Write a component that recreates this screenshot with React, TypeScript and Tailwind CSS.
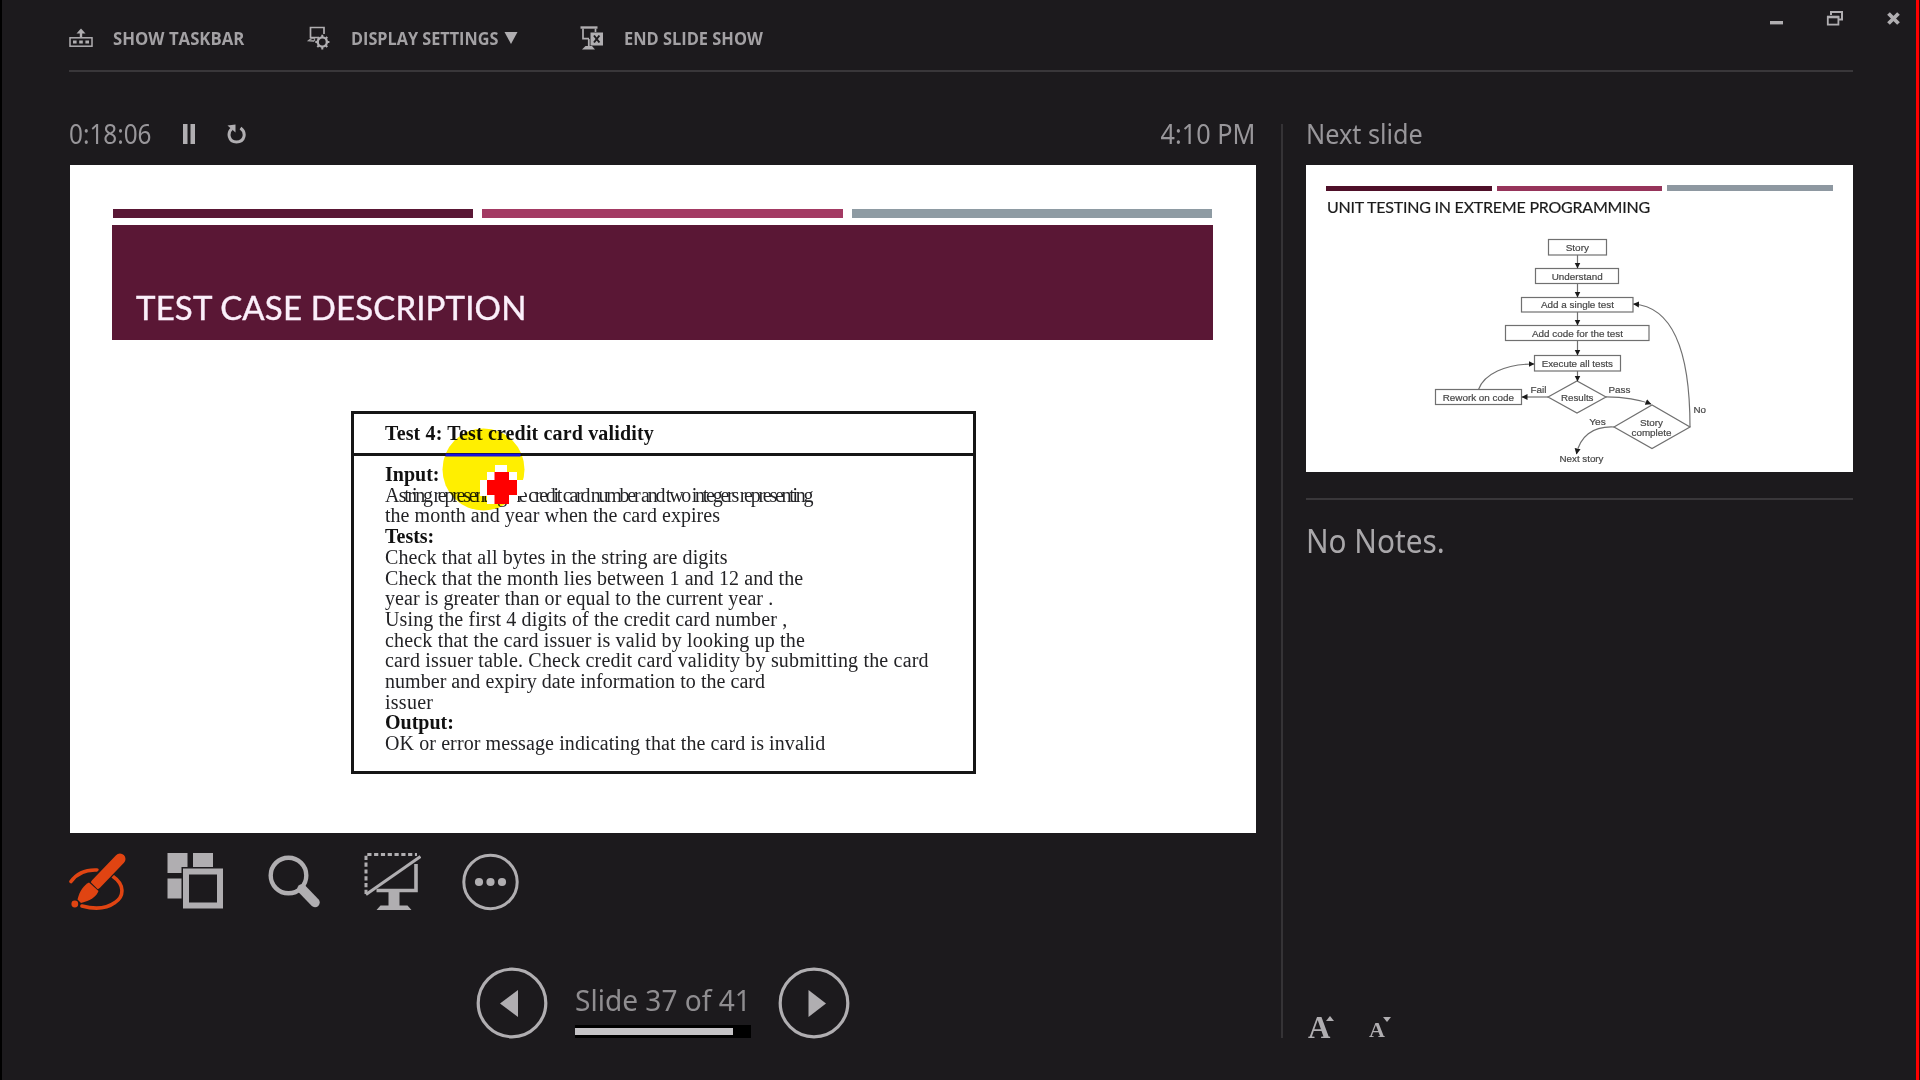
import type { ReactNode } from "react";

const INK = "#b0aeb1";

function TaskbarIcon() {
  return (
    <svg width="24" height="20" viewBox="0 0 24 20" fill="none" stroke={INK}>
      <path d="M12 9V4" strokeWidth="2.4" />
      <path d="M7.5 5.5L12 0.5L16.5 5.5Z" fill={INK} stroke="none" />
      <rect x="1" y="9.8" width="22" height="8.4" strokeWidth="1.5" />
      <path d="M4 14h3.6M10.2 14h3.6M16.4 14H20" strokeWidth="3.2" />
    </svg>
  );
}

function DisplayIcon() {
  return (
    <svg width="24" height="24" viewBox="0 0 24 24" fill="none" stroke={INK} strokeWidth="1.7">
      <path d="M10 11.5H3.5V1.5H17V8" />
      <path d="M2 14.5h6l-1.5-2M0.5 15l3-2.5h4.5l-1 3Z" fill={INK} strokeWidth="0.5" />
      <circle cx="15.3" cy="16" r="4.6" strokeWidth="2.4" />
      <path
        d="M15.3 8.8v3M15.3 20.4v3M8.3 16h3M19.4 16h3M10.3 11l2 2M18.3 19l2 2M20.3 11l-2 2M12.3 19l-2 2"
        strokeWidth="2"
      />
    </svg>
  );
}

function EndShowIcon() {
  return (
    <svg width="24" height="24" viewBox="0 0 24 24" fill="none" stroke={INK}>
      <path d="M0.5 1.5H17.5" strokeWidth="2.4" />
      <path d="M3 2.5V12.6H9M15.5 2.5V6" strokeWidth="1.7" />
      <path d="M8.8 13V21" strokeWidth="1.8" />
      <path d="M2 23.5l3.5-3.5h6.5l3 3.5Z" fill={INK} stroke="none" />
      <rect x="10.5" y="6.5" width="12.5" height="13" fill={INK} stroke="none" />
      <path d="M14 9.5l5.4 7M19.4 9.5l-5.4 7" stroke="#1c1a1d" strokeWidth="2" />
    </svg>
  );
}

function TopAction({ icon, children }: { icon: ReactNode; children: ReactNode }) {
  return (
    <button className="flex items-center">
      {icon}
      <span className="ml-[20px] flex items-center whitespace-nowrap text-[18px] leading-6 font-bold text-[#a3a1a4]">
        {children}
      </span>
    </button>
  );
}

function TopBar() {
  return (
    <header className="flex h-[72px] w-full">
      <div className="ml-[67px] flex h-full w-[1784px] border-b-2 border-[#39373a]">
        <nav className="mt-[26px] flex h-6 items-center">
          <div className="w-[238px]">
            <TopAction icon={<TaskbarIcon />}>
              <span className="origin-left scale-x-[0.93]">SHOW TASKBAR</span>
            </TopAction>
          </div>
          <div className="w-[273px]">
            <TopAction icon={<DisplayIcon />}>
              <span className="w-[149px] origin-left scale-x-[0.902]">DISPLAY SETTINGS</span>
              <svg className="ml-1" width="14" height="12" viewBox="0 0 14 12">
                <path d="M0.5 0H13.5L7 12Z" fill={INK} />
              </svg>
            </TopAction>
          </div>
          <TopAction icon={<EndShowIcon />}>
            <span className="origin-left scale-x-[0.912]">END SLIDE SHOW</span>
          </TopAction>
        </nav>
        <div className="mt-[10px] -mr-[47px] ml-auto flex h-[18px] shrink-0">
          <svg width="131" height="18" viewBox="0 0 131 18" fill="none" stroke={INK}>
            <path d="M1 12.7H14" strokeWidth="3.4" />
            <path d="M62 5V2H73V9.5H69.5" strokeWidth="2" />
            <rect x="58.8" y="7" width="10.6" height="7.6" strokeWidth="1.8" />
            <path d="M58 7H70.3" strokeWidth="2.6" />
            <path d="M119.5 3.5L129.5 13.5M129.5 3.5L119.5 13.5" strokeWidth="3.8" />
          </svg>
        </div>
      </div>
    </header>
  );
}

const BOLD = "font-bold text-[#111111]";

const BODY: [string, string][] = [
  ["Input:", BOLD],
  ["A string representing the credit card number and two integers representing", "tracking-[-2.27px]"],
  ["the month and year when the card expires", "tracking-[0.03px]"],
  ["Tests:", BOLD],
  ["Check that all bytes in the string are digits", "tracking-[0.11px]"],
  ["Check that the month lies between 1 and 12 and the", "tracking-[0.1px]"],
  ["year is greater than or equal to the current year .", "tracking-[0.09px]"],
  ["Using the first 4 digits of the credit card number ,", "tracking-[0.12px]"],
  ["check that the card issuer is valid by looking up the", "tracking-[0.17px]"],
  ["card issuer table. Check credit card validity by submitting the card", "tracking-[0.18px]"],
  ["number and expiry date information to the card", "tracking-[0.04px]"],
  ["issuer", "tracking-[0.26px]"],
  ["Output:", BOLD],
  ["OK or error message indicating that the card is invalid", "tracking-[0.1px]"],
];

function CurrentSlide() {
  return (
    <section className="relative h-[668px] w-[1186px] bg-white pt-11">
      <div className="mr-[44px] ml-[43px] flex h-[9px] gap-[9px]">
        <div className="flex-1 bg-[#5a1735]" />
        <div className="flex-1 bg-[#a33a63]" />
        <div className="flex-1 bg-[#8e9ba3]" />
      </div>
      <div className="mr-[43px] ml-[42px] mt-[7px] h-[115px] bg-[#5a1735] pt-[62px] pl-[24px]">
        <h1 className="font-[Lato] text-[33px] leading-10 tracking-[0.15px] whitespace-nowrap text-[#fbeffa] [-webkit-text-stroke:0.4px_#fbeffa]">
          TEST CASE DESCRIPTION
        </h1>
      </div>
      <div className="mt-[71px] ml-[281px] h-[363px] w-[625px] border-[3px] border-[#161616] font-['Liberation_Serif',serif] text-[20px] leading-[20.7px] whitespace-nowrap text-[#232326]">
        <div className="h-[42px] border-b-[3px] border-[#161616] pt-[9px] pl-[31px] font-bold tracking-[0.15px] text-[#111111]">
          Test 4: Test credit card validity
        </div>
        <div className="pt-[8px] pl-[31px]">
          {BODY.map(([text, style]) => (
            <p key={text} className={style}>
              {text}
            </p>
          ))}
        </div>
      </div>
      <svg
        className="absolute top-[263px] left-[372px] mix-blend-multiply"
        width="83"
        height="83"
        viewBox="0 0 83 83"
      >
        <circle cx="41.5" cy="41.5" r="41" fill="#ffef00" />
      </svg>
      <svg className="absolute top-[288px] left-[373px]" width="90" height="60" viewBox="0 0 90 60">
        <path d="M2.5 2H77.5" stroke="#1a12dc" strokeWidth="3" />
        <path
          d="M52 12H64V19H74V27H81V43H74V51H44V43H37V27H44V19H52Z"
          fill="#ffffff"
        />
        <path d="M51.500 19H66V27H74V42H66V51H51.500V42H44V27H51.500Z" fill="#ff0000" />
      </svg>
    </section>
  );
}

function ToolRow() {
  return (
    <div className="-ml-px flex h-[60px] items-center gap-[40px]">
      <svg width="58" height="58" viewBox="0 0 58 58" fill="none" stroke="#e04412">
        <path
          d="M2 28.500C8 20 17 16.500 28 17M44 23.500C55 31 56 43 46 49.500C37 56 24 56 13 53"
          strokeWidth="3.6"
          strokeLinecap="round"
        />
        <path d="M51 6L25 32" stroke="#1c1a1d" strokeWidth="14" />
        <path d="M51 6L27 31" strokeWidth="11" strokeLinecap="round" />
        <path d="M19 27.500L31 39.500" stroke="#1c1a1d" strokeWidth="1.400" />
        <path d="M20 29.500L29.500 38C28 43 21 48 12 50L8.500 46.500C10.500 38 15 32 20 29.500Z" fill="#e04412" stroke="none" />
        <circle cx="5.800" cy="51" r="3.400" fill="#e04412" stroke="none" />
      </svg>
      <svg width="58" height="58" viewBox="0 0 58 58" fill={INK}>
        <path d="M0.500 0H20.500V20H0.500ZM26 0H46V20H26ZM0.500 25.500H20.500V45.500H0.500Z" />
        <rect x="14.500" y="14" width="43" height="43" fill="#1c1a1d" />
        <path fillRule="evenodd" d="M16 15.500H56V55.500H16ZM22 21.500V49.500H50V21.500Z" />
      </svg>
      <svg width="58" height="58" viewBox="0 0 58 58" fill="none" stroke={INK}>
        <circle cx="23.500" cy="22.500" r="17.800" strokeWidth="4.400" />
        <path d="M37 36L50 49.500" strokeWidth="9.500" strokeLinecap="round" />
      </svg>
      <svg width="58" height="58" viewBox="0 0 58 58" fill="none" stroke={INK}>
        <path d="M3 41V1.500H54" strokeWidth="3" strokeDasharray="4.200 2.600" />
        <path d="M3 41.500L57.500 3.500" strokeWidth="3" />
        <path d="M53 11V37.500H13.500" strokeWidth="3.600" />
        <path d="M25.500 38H36.500V52.500H44.500L48.500 57H13.500L17.500 52.500H25.500Z" fill={INK} stroke="none" />
      </svg>
      <svg width="58" height="58" viewBox="0 0 58 58" fill="none" stroke={INK}>
        <circle cx="29.500" cy="29" r="26.700" strokeWidth="3" />
        <g fill={INK} stroke="none">
          <circle cx="18" cy="29" r="4.100" />
          <circle cx="29.500" cy="29" r="4.100" />
          <circle cx="41" cy="29" r="4.100" />
        </g>
      </svg>
    </div>
  );
}

function RoundArrow({ direction }: { direction: "prev" | "next" }) {
  return (
    <button className="h-[72px] w-[72px]">
      <svg width="72" height="72" viewBox="0 0 72 72">
        <circle cx="36" cy="36" r="33.800" fill="none" stroke={INK} strokeWidth="3.200" />
        <path d={direction === "prev" ? "M24 36.500L42 23V50Z" : "M48 36.500L30.500 23V50Z"} fill={INK} />
      </svg>
    </button>
  );
}

function SlideNav() {
  return (
    <div className="flex h-[72px] pl-[406px]">
      <RoundArrow direction="prev" />
      <div className="ml-[27px] w-[176px] pt-[13px]">
        <div className="origin-left scale-x-[0.952] font-['Noto_Sans',sans-serif] text-[29.5px] leading-[40px] whitespace-nowrap text-[#8f8d90]">
          Slide 37 of 41
        </div>
        <div className="mt-[5px] h-[13px] w-[176px] bg-black py-[3px]">
          <div className="h-[7px] w-[158px] bg-[#c5c3c6]" />
        </div>
      </div>
      <div className="ml-[27px]">
        <RoundArrow direction="next" />
      </div>
    </div>
  );
}

const BOXES: [number, number, number, number][] = [
  [1548.5, 239.5, 58, 15.5],
  [1535.5, 268.5, 83, 15],
  [1521.5, 297.5, 111.5, 14.5],
  [1505.5, 325.5, 143.5, 15],
  [1534.5, 355.5, 86, 15.5],
  [1435.5, 389.5, 86, 15],
];

const LABELS: [string, number, number, number][] = [
  ["Story", 1565.7, 251, 23.3],
  ["Understand", 1551.7, 280, 51],
  ["Add a single test", 1541, 308.3, 73],
  ["Add code for the test", 1532, 336.7, 91],
  ["Execute all tests", 1541.7, 367.2, 71.3],
  ["Rework on code", 1442.7, 400.5, 71.3],
  ["Results", 1561, 400.5, 32.5],
  ["Fail", 1530.5, 393.3, 16],
  ["Pass", 1608.5, 393.3, 22],
  ["No", 1693.5, 413.3, 12.5],
  ["Yes", 1589.3, 425, 16.5],
  ["Story", 1640, 425.5, 23],
  ["complete", 1631.5, 435.7, 40],
  ["Next story", 1559.5, 462, 44],
];

function FlowChart() {
  return (
    <svg className="ml-[124px]" width="285" height="240" viewBox="1430 228 285 240" fill="none">
      <defs>
        <marker id="tip" markerUnits="userSpaceOnUse" markerWidth="7" markerHeight="7" refX="5.5" refY="3.5" orient="auto">
          <path d="M0 0.5L6 3.500L0 6.500Z" fill="#1a1a1a" />
        </marker>
      </defs>
      <g stroke="#707070" strokeWidth="1.200">
        {BOXES.map(([x, y, w, h]) => (
          <rect key={y} x={x} y={y} width={w} height={h} />
        ))}
        <path d="M1548 397L1577 381L1606 397L1577 413Z" />
        <path d="M1614 427L1652 405L1690 427L1652 448.500Z" />
        <path d="M1577.500 255V268" markerEnd="url(#tip)" />
        <path d="M1577.500 284V297" markerEnd="url(#tip)" />
        <path d="M1577.500 312V325" markerEnd="url(#tip)" />
        <path d="M1577.500 341V355" markerEnd="url(#tip)" />
        <path d="M1577.500 371V381" markerEnd="url(#tip)" />
        <path d="M1548 397H1522" markerEnd="url(#tip)" />
        <path d="M1606 396.800C1623 397 1637 398.500 1651 404" markerEnd="url(#tip)" />
        <path d="M1478.500 389.500C1484 374 1505 364 1534 364" markerEnd="url(#tip)" />
        <path d="M1690 427C1690 360 1676 307 1633.500 304" markerEnd="url(#tip)" />
        <path d="M1614 427C1592 426 1580 437 1576.500 454" markerEnd="url(#tip)" />
      </g>
      <g
        className="font-['Liberation_Sans',sans-serif] text-[9.500px]"
        fill="#484848"
        stroke="#484848"
        strokeWidth="0.200"
      >
        {LABELS.map(([text, x, y, w]) => (
          <text key={`${text}-${x}`} x={x} y={y} textLength={w} lengthAdjust="spacingAndGlyphs">
            {text}
          </text>
        ))}
      </g>
    </svg>
  );
}

function NextSlide() {
  return (
    <section className="h-[307px] w-[547px] bg-white pt-5">
      <div className="ml-5 flex h-[6px] w-[507px] items-end gap-[5px]">
        <div className="h-[5px] flex-1 bg-[#4f1029]" />
        <div className="h-[5px] flex-1 bg-[#96345a]" />
        <div className="h-[6px] flex-1 bg-[#8e98a1]" />
      </div>
      <h2 className="mt-[5px] ml-[21px] font-[Lato] text-[16px] leading-[22px] tracking-[-0.22px] whitespace-nowrap text-[#1b1b1b] [-webkit-text-stroke:0.2px_#1b1b1b]">
        UNIT TESTING IN EXTREME PROGRAMMING
      </h2>
      <div className="mt-[10px]">
        <FlowChart />
      </div>
    </section>
  );
}

function FontSizeControls() {
  return (
    <div className="flex items-end font-['Liberation_Serif',serif] font-bold text-[#b0aeb1]">
      <button className="flex h-[26px] w-[61px] items-start">
        <span className="mt-[-2px] text-[31px] leading-[32px]">A</span>
        <svg className="mt-[2px] -ml-[4px]" width="8" height="6" viewBox="0 0 8 6">
          <path d="M4 0L8 5H0Z" fill={INK} />
        </svg>
      </button>
      <button className="flex h-[26px] items-start">
        <span className="mt-[4px] text-[22px] leading-[24px]">A</span>
        <svg className="mt-[3px] -ml-[2px]" width="8" height="6" viewBox="0 0 8 6">
          <path d="M0 0H8L4 5Z" fill={INK} />
        </svg>
      </button>
    </div>
  );
}

export default function App() {
  return (
    <div className="flex h-[1080px] w-[1920px] overflow-hidden border-l-2 border-black bg-[#1c1a1d] font-['Open_Sans',sans-serif]">
      <div className="flex min-w-0 flex-1 flex-col">
        <TopBar />
        <main className="flex flex-1 pl-[68px]">
          <div className="w-[1186px] pt-[44px]">
            <div className="-ml-px flex h-9 items-center font-['Noto_Sans',sans-serif] text-[27px] leading-9 text-[#98969a]">
              <span className="w-[113px] shrink-0">
                <span className="inline-block origin-left scale-x-[0.9]">0:18:06</span>
              </span>
              <svg width="14" height="20" viewBox="0 0 14 20">
                <path d="M1 0H5.500V20H1ZM8.500 0H13V20H8.500Z" fill={INK} />
              </svg>
              <svg className="ml-[31px]" width="20" height="20" viewBox="0 0 20 20" fill="none" stroke={INK}>
                <path d="M5 4.500C0 9 1.500 18 9.500 18C18 18 19.500 8.500 13.500 4" strokeWidth="3" />
                <path d="M0.500 1.500L8.500 0.500L8.500 8.500Z" fill={INK} stroke="none" />
              </svg>
              <span className="mr-px ml-auto origin-right scale-x-[0.935]">4:10 PM</span>
            </div>
            <div className="mt-[13px]">
              <CurrentSlide />
            </div>
            <div className="mt-[19px]">
              <ToolRow />
            </div>
            <div className="mt-[55px]">
              <SlideNav />
            </div>
          </div>
          <div className="mt-[52px] ml-[25px] h-[914px] w-[2px] bg-[#353336]" />
          <aside className="ml-[23px] flex h-full w-[547px] flex-col pt-[44px]">
            <div className="origin-left scale-x-[0.935] font-['Noto_Sans',sans-serif] text-[27px] leading-9 text-[#98969a]">
              Next slide
            </div>
            <div className="mt-[13px]">
              <NextSlide />
            </div>
            <div className="mt-[26px] h-[2px] bg-[#39373a]" />
            <div className="mt-[21px] origin-left scale-x-[0.93] font-['Noto_Sans',sans-serif] text-[32px] leading-10 text-[#a9a7aa]">
              No Notes.
            </div>
            <div className="mt-auto mb-[40px] ml-[2px]">
              <FontSizeControls />
            </div>
          </aside>
        </main>
      </div>
      <div className="h-full w-[4px] border-r border-[#3a0606] bg-[#ff0000]" />
    </div>
  );
}
